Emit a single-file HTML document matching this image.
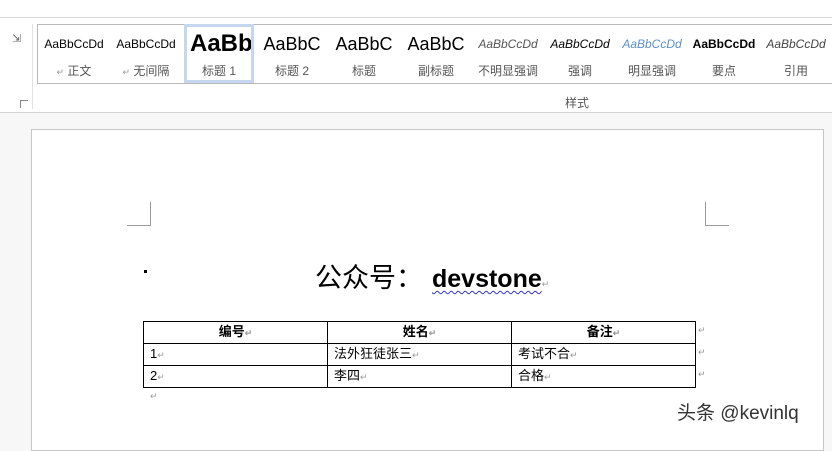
<!DOCTYPE html>
<html><head><meta charset="utf-8"><style>
body{margin:0;width:832px;height:435px;overflow:hidden;background:#f7f7f7;font-family:"Liberation Sans","Noto Sans CJK SC",sans-serif;position:relative}
.a{position:absolute}
.ribbon{left:0;top:0;width:832px;height:112px;background:#fff;border-bottom:1px solid #d4d4d4}
.gal{left:37px;top:24px;width:800px;height:58px;border:1px solid #b9b9b9;border-right:none;background:#fff}
.it{position:absolute;top:0;height:58px;text-align:center}
.s{position:absolute;left:0;right:0;top:12px;font-size:12px;white-space:nowrap;overflow:hidden}
.l{position:absolute;left:0;right:0;top:37px;font-size:12px;color:#555}
.page{left:31px;top:129px;width:791px;height:320px;background:#fff;border:1px solid #c6c6c6}
table{position:absolute;left:143px;top:321px;border-collapse:collapse;font-size:13px}
td{border:1px solid #000;height:20px;padding:0 6px;line-height:19px;width:171px}
.m{color:#999;font-size:9px}
</style></head><body>
<div class="a ribbon"></div>
<div class="a" style="left:0;top:17px;width:832px;height:1px;background:#dadada"></div>
<div class="a" style="left:32px;top:24px;width:1px;height:85px;background:#e2e2e2"></div>
<div class="a" style="left:12px;top:32px;font-size:11px;color:#666">⇲</div>
<div class="a" style="left:20px;top:100px;width:7px;height:7px;border:1px solid #888;border-width:1px 0 0 1px"></div>
<div class="a gal">
<div class="it" style="left:0;width:72px"><div class="s" style="font-size:12px">AaBbCcDd</div><div class="l"><span class="m">↵</span> 正文</div></div>
<div class="it" style="left:72px;width:72px"><div class="s">AaBbCcDd</div><div class="l"><span class="m">↵</span> 无间隔</div></div>
<div class="it" style="left:146px;width:64px;height:53px;border:3px solid #c5d7ef;top:-1px"><div class="s" style="top:3px;font-size:24px;font-weight:bold;text-align:left;padding-left:3px">AaBb</div><div class="l" style="top:35px">标题 1</div></div>
<div class="it" style="left:218px;width:72px"><div class="s" style="top:9px;font-size:18px">AaBbC</div><div class="l">标题 2</div></div>
<div class="it" style="left:290px;width:72px"><div class="s" style="top:9px;font-size:18px">AaBbC</div><div class="l">标题</div></div>
<div class="it" style="left:362px;width:72px"><div class="s" style="top:9px;font-size:18px">AaBbC</div><div class="l">副标题</div></div>
<div class="it" style="left:434px;width:72px"><div class="s" style="font-style:italic;color:#555">AaBbCcDd</div><div class="l">不明显强调</div></div>
<div class="it" style="left:506px;width:72px"><div class="s" style="font-style:italic">AaBbCcDd</div><div class="l">强调</div></div>
<div class="it" style="left:578px;width:72px"><div class="s" style="font-style:italic;color:#5b8fc9">AaBbCcDd</div><div class="l">明显强调</div></div>
<div class="it" style="left:650px;width:72px"><div class="s" style="font-weight:bold">AaBbCcDd</div><div class="l">要点</div></div>
<div class="it" style="left:722px;width:72px"><div class="s" style="font-style:italic;color:#444">AaBbCcDd</div><div class="l">引用</div></div>
</div>
<div class="a" style="left:565px;top:94px;font-size:12px;color:#555">样式</div>
<div class="a page"></div>
<div class="a" style="left:150px;top:202px;width:1px;height:23px;background:#999"></div>
<div class="a" style="left:127px;top:225px;width:24px;height:1px;background:#999"></div>
<div class="a" style="left:705px;top:202px;width:1px;height:23px;background:#999"></div>
<div class="a" style="left:705px;top:225px;width:24px;height:1px;background:#999"></div>
<div class="a" style="left:144px;top:270px;width:3px;height:3px;background:#000"></div>
<div class="a" style="left:315px;top:256px;font-size:25px;white-space:nowrap"><span style="display:inline-block;width:117px;font-size:27px;font-family:'Noto Sans CJK SC',sans-serif">公众号：</span><b style="text-decoration:underline wavy #33c;text-decoration-thickness:1px;text-underline-offset:3px">devstone</b><span class="m">↵</span></div>
<table>
<tr><td style="text-align:center;font-weight:bold">编号<span class="m">↵</span></td><td style="text-align:center;font-weight:bold">姓名<span class="m">↵</span></td><td style="text-align:center;font-weight:bold">备注<span class="m">↵</span></td></tr>
<tr><td>1<span class="m">↵</span></td><td>法外狂徒张三<span class="m">↵</span></td><td>考试不合<span class="m">↵</span></td></tr>
<tr><td>2<span class="m">↵</span></td><td>李四<span class="m">↵</span></td><td>合格<span class="m">↵</span></td></tr>
</table>
<div class="a m" style="left:698px;top:325px">↵</div>
<div class="a m" style="left:698px;top:347px">↵</div>
<div class="a m" style="left:698px;top:369px">↵</div>
<div class="a m" style="left:150px;top:391px">↵</div>
<div class="a" style="left:677px;top:398px;font-size:19px;color:#333">头条 @kevinlq</div>
</body></html>
